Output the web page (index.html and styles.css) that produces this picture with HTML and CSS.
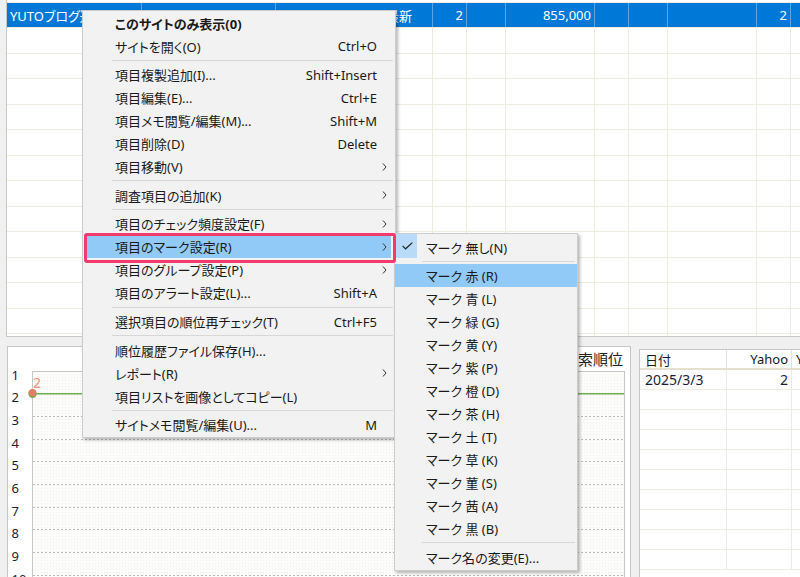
FILE: index.html
```html
<!DOCTYPE html>
<html lang="ja">
<head>
<meta charset="utf-8">
<title>順位チェック</title>
<link rel="stylesheet" href="styles.css">
</head>
<body>
<div class="app">
  <div class="list">
    <div class="row sel">
      <div class="cell w1">YUTOブログ運営</div>
      <div class="cell w2"></div>
      <div class="cell w3 r">最新</div>
      <div class="cell w4 r">2</div>
      <div class="cell w5"></div>
      <div class="cell w6 r">855,000</div>
      <div class="cell w4"></div>
      <div class="cell w5"></div>
      <div class="cell w6"></div>
      <div class="cell w4 r">2</div>
      <div class="cell w7"></div>
    </div>
    <div class="row"><div class="cell w1"></div><div class="cell w2"></div><div class="cell w3"></div><div class="cell w4"></div><div class="cell w5"></div><div class="cell w6"></div><div class="cell w4"></div><div class="cell w5"></div><div class="cell w6"></div><div class="cell w4"></div><div class="cell w7"></div></div>
    <div class="row"><div class="cell w1"></div><div class="cell w2"></div><div class="cell w3"></div><div class="cell w4"></div><div class="cell w5"></div><div class="cell w6"></div><div class="cell w4"></div><div class="cell w5"></div><div class="cell w6"></div><div class="cell w4"></div><div class="cell w7"></div></div>
    <div class="row"><div class="cell w1"></div><div class="cell w2"></div><div class="cell w3"></div><div class="cell w4"></div><div class="cell w5"></div><div class="cell w6"></div><div class="cell w4"></div><div class="cell w5"></div><div class="cell w6"></div><div class="cell w4"></div><div class="cell w7"></div></div>
    <div class="row"><div class="cell w1"></div><div class="cell w2"></div><div class="cell w3"></div><div class="cell w4"></div><div class="cell w5"></div><div class="cell w6"></div><div class="cell w4"></div><div class="cell w5"></div><div class="cell w6"></div><div class="cell w4"></div><div class="cell w7"></div></div>
    <div class="row"><div class="cell w1"></div><div class="cell w2"></div><div class="cell w3"></div><div class="cell w4"></div><div class="cell w5"></div><div class="cell w6"></div><div class="cell w4"></div><div class="cell w5"></div><div class="cell w6"></div><div class="cell w4"></div><div class="cell w7"></div></div>
    <div class="row"><div class="cell w1"></div><div class="cell w2"></div><div class="cell w3"></div><div class="cell w4"></div><div class="cell w5"></div><div class="cell w6"></div><div class="cell w4"></div><div class="cell w5"></div><div class="cell w6"></div><div class="cell w4"></div><div class="cell w7"></div></div>
    <div class="row"><div class="cell w1"></div><div class="cell w2"></div><div class="cell w3"></div><div class="cell w4"></div><div class="cell w5"></div><div class="cell w6"></div><div class="cell w4"></div><div class="cell w5"></div><div class="cell w6"></div><div class="cell w4"></div><div class="cell w7"></div></div>
    <div class="row"><div class="cell w1"></div><div class="cell w2"></div><div class="cell w3"></div><div class="cell w4"></div><div class="cell w5"></div><div class="cell w6"></div><div class="cell w4"></div><div class="cell w5"></div><div class="cell w6"></div><div class="cell w4"></div><div class="cell w7"></div></div>
    <div class="row"><div class="cell w1"></div><div class="cell w2"></div><div class="cell w3"></div><div class="cell w4"></div><div class="cell w5"></div><div class="cell w6"></div><div class="cell w4"></div><div class="cell w5"></div><div class="cell w6"></div><div class="cell w4"></div><div class="cell w7"></div></div>
    <div class="row"><div class="cell w1"></div><div class="cell w2"></div><div class="cell w3"></div><div class="cell w4"></div><div class="cell w5"></div><div class="cell w6"></div><div class="cell w4"></div><div class="cell w5"></div><div class="cell w6"></div><div class="cell w4"></div><div class="cell w7"></div></div>
    <div class="row"><div class="cell w1"></div><div class="cell w2"></div><div class="cell w3"></div><div class="cell w4"></div><div class="cell w5"></div><div class="cell w6"></div><div class="cell w4"></div><div class="cell w5"></div><div class="cell w6"></div><div class="cell w4"></div><div class="cell w7"></div></div>
    <div class="row"><div class="cell w1"></div><div class="cell w2"></div><div class="cell w3"></div><div class="cell w4"></div><div class="cell w5"></div><div class="cell w6"></div><div class="cell w4"></div><div class="cell w5"></div><div class="cell w6"></div><div class="cell w4"></div><div class="cell w7"></div></div>
    <div class="row"><div class="cell w1"></div><div class="cell w2"></div><div class="cell w3"></div><div class="cell w4"></div><div class="cell w5"></div><div class="cell w6"></div><div class="cell w4"></div><div class="cell w5"></div><div class="cell w6"></div><div class="cell w4"></div><div class="cell w7"></div></div>
  </div>

  <div class="bottom">
    <div class="chart">
      <svg class="chart-svg" width="622" height="240" viewBox="0 0 622 240">
        <defs>
          <pattern id="dots" width="3" height="3" patternUnits="userSpaceOnUse">
            <rect width="3" height="3" fill="#fcfcfa"/>
            <rect width="1" height="1" fill="#efefec"/>
          </pattern>
        </defs>
        <rect x="24.5" y="24.5" width="592" height="230" fill="url(#dots)" stroke="#c6c6c6"/>
        <g stroke="#b9b9b9" stroke-dasharray="2 2" stroke-width="1">
          <line x1="25" y1="69.5" x2="616" y2="69.5"/>
          <line x1="25" y1="92.5" x2="616" y2="92.5"/>
          <line x1="25" y1="114.5" x2="616" y2="114.5"/>
          <line x1="25" y1="137.5" x2="616" y2="137.5"/>
          <line x1="25" y1="160.5" x2="616" y2="160.5"/>
          <line x1="25" y1="182.5" x2="616" y2="182.5"/>
          <line x1="25" y1="205.5" x2="616" y2="205.5"/>
          <line x1="25" y1="228.5" x2="616" y2="228.5"/>
        </g>
        <line x1="25" y1="46.7" x2="616" y2="46.7" stroke="#6fae4f" stroke-width="1.6"/>
        <circle cx="24.5" cy="46.8" r="4.2" fill="#6fae4f"/>
        <circle cx="24.5" cy="45.8" r="3.8" fill="#e47d66"/>
        <text class="pt" x="25" y="41">2</text>
        <g class="ax">
          <text x="3.5" y="32.7">1</text>
          <text x="3.5" y="55.4">2</text>
          <text x="3.5" y="78">3</text>
          <text x="3.5" y="100.7">4</text>
          <text x="3.5" y="123.4">5</text>
          <text x="3.5" y="146">6</text>
          <text x="3.5" y="168.7">7</text>
          <text x="3.5" y="191.4">8</text>
          <text x="3.5" y="214">9</text>
          <text x="3.5" y="236.7">10</text>
        </g>
        <text class="ttl" x="615" y="18" text-anchor="end">検索順位</text>
      </svg>
    </div>
    <div class="hist">
      <div class="hrow hhead"><div class="hc hc1">日付</div><div class="hc hc2">Yahoo</div><div class="hc hc3">Y</div></div>
      <div class="hrow"><div class="hc hc1 date">2025/3/3</div><div class="hc hc2 date">2</div><div class="hc hc3"></div></div>
      <div class="hrow"><div class="hc hc1"></div><div class="hc hc2"></div><div class="hc hc3"></div></div>
      <div class="hrow"><div class="hc hc1"></div><div class="hc hc2"></div><div class="hc hc3"></div></div>
      <div class="hrow"><div class="hc hc1"></div><div class="hc hc2"></div><div class="hc hc3"></div></div>
      <div class="hrow"><div class="hc hc1"></div><div class="hc hc2"></div><div class="hc hc3"></div></div>
      <div class="hrow"><div class="hc hc1"></div><div class="hc hc2"></div><div class="hc hc3"></div></div>
      <div class="hrow"><div class="hc hc1"></div><div class="hc hc2"></div><div class="hc hc3"></div></div>
      <div class="hrow"><div class="hc hc1"></div><div class="hc hc2"></div><div class="hc hc3"></div></div>
      <div class="hrow"><div class="hc hc1"></div><div class="hc hc2"></div><div class="hc hc3"></div></div>
      <div class="hrow"><div class="hc hc1"></div><div class="hc hc2"></div><div class="hc hc3"></div></div>
    </div>
  </div>
</div>

<div class="menu">
  <div class="mi b"><span class="lb">このサイトのみ表示(0)</span><span class="sc"></span><span class="ar"></span></div>
  <div class="mi"><span class="lb">サイトを開く(O)</span><span class="sc">Ctrl+O</span><span class="ar"></span></div>
  <div class="sep"></div>
  <div class="mi"><span class="lb">項目複製追加(I)...</span><span class="sc">Shift+Insert</span><span class="ar"></span></div>
  <div class="mi"><span class="lb">項目編集(E)...</span><span class="sc">Ctrl+E</span><span class="ar"></span></div>
  <div class="mi"><span class="lb">項目メモ閲覧/編集(M)...</span><span class="sc">Shift+M</span><span class="ar"></span></div>
  <div class="mi"><span class="lb">項目削除(D)</span><span class="sc">Delete</span><span class="ar"></span></div>
  <div class="mi"><span class="lb">項目移動(V)</span><span class="sc"></span><span class="ar"><svg width="5" height="8" viewBox="0 0 5 8"><path d="M1 .5L4 4L1 7.5" fill="none" stroke="#333" stroke-width="1"/></svg></span></div>
  <div class="sep"></div>
  <div class="mi"><span class="lb">調査項目の追加(K)</span><span class="sc"></span><span class="ar"><svg width="5" height="8" viewBox="0 0 5 8"><path d="M1 .5L4 4L1 7.5" fill="none" stroke="#333" stroke-width="1"/></svg></span></div>
  <div class="sep"></div>
  <div class="mi"><span class="lb">項目のチェック頻度設定(F)</span><span class="sc"></span><span class="ar"><svg width="5" height="8" viewBox="0 0 5 8"><path d="M1 .5L4 4L1 7.5" fill="none" stroke="#333" stroke-width="1"/></svg></span></div>
  <div class="mi hov"><span class="lb">項目のマーク設定(R)</span><span class="sc"></span><span class="ar"><svg width="5" height="8" viewBox="0 0 5 8"><path d="M1 .5L4 4L1 7.5" fill="none" stroke="#333" stroke-width="1"/></svg></span></div>
  <div class="mi"><span class="lb">項目のグループ設定(P)</span><span class="sc"></span><span class="ar"><svg width="5" height="8" viewBox="0 0 5 8"><path d="M1 .5L4 4L1 7.5" fill="none" stroke="#333" stroke-width="1"/></svg></span></div>
  <div class="mi"><span class="lb">項目のアラート設定(L)...</span><span class="sc">Shift+A</span><span class="ar"></span></div>
  <div class="sep"></div>
  <div class="mi"><span class="lb">選択項目の順位再チェック(T)</span><span class="sc">Ctrl+F5</span><span class="ar"></span></div>
  <div class="sep"></div>
  <div class="mi"><span class="lb">順位履歴ファイル保存(H)...</span><span class="sc"></span><span class="ar"></span></div>
  <div class="mi"><span class="lb">レポート(R)</span><span class="sc"></span><span class="ar"><svg width="5" height="8" viewBox="0 0 5 8"><path d="M1 .5L4 4L1 7.5" fill="none" stroke="#333" stroke-width="1"/></svg></span></div>
  <div class="mi"><span class="lb">項目リストを画像としてコピー(L)</span><span class="sc"></span><span class="ar"></span></div>
  <div class="sep"></div>
  <div class="mi"><span class="lb">サイトメモ閲覧/編集(U)...</span><span class="sc">M</span><span class="ar"></span></div>
</div>

<div class="submenu">
  <div class="si checked"><span class="chk"><svg width="11" height="8" viewBox="0 0 11 8"><path d="M.6 3.8L3.6 6.8L10.3 .6" fill="none" stroke="#222" stroke-width="1.2"/></svg></span>マーク 無し(N)</div>
  <div class="ssep"></div>
  <div class="si hov">マーク 赤 (R)</div>
  <div class="si">マーク 青 (L)</div>
  <div class="si">マーク 緑 (G)</div>
  <div class="si">マーク 黄 (Y)</div>
  <div class="si">マーク 紫 (P)</div>
  <div class="si">マーク 橙 (D)</div>
  <div class="si">マーク 茶 (H)</div>
  <div class="si">マーク 土 (T)</div>
  <div class="si">マーク 草 (K)</div>
  <div class="si">マーク 菫 (S)</div>
  <div class="si">マーク 茜 (A)</div>
  <div class="si">マーク 黒 (B)</div>
  <div class="ssep"></div>
  <div class="si">マーク名の変更(E)...</div>
</div>

<div class="mark-box"></div>
</body>
</html>
```

FILE: styles.css
```css
* { box-sizing: border-box; margin: 0; padding: 0; }
html, body { width: 800px; height: 577px; overflow: hidden; }
body {
  position: relative;
  background: #f0f0f0;
  font-family: "Noto Sans", "Noto Sans CJK JP", sans-serif;
  font-size: 13px;
  color: #1a1a1a;
  font-feature-settings: "palt";
}
.app { height: 577px; display: flex; flex-direction: column; }

/* top list */
.list {
  flex: none;
  height: 337px;
  margin-left: 6px;
  padding-top: 2px;
  background: #fff;
  border-left: 1px solid #c9c9c9;
  border-bottom: 1px solid #c9c9c9;
  overflow: hidden;
}
.row { display: flex; height: 25.5px; border-top: 1px solid #efebdf; }
.row.sel { height: 25px; background: #0078d7; color: #fff; }
.cell {
  flex: none;
  height: 100%;
  display: flex;
  align-items: center;
  padding: 0 3px;
  white-space: nowrap;
  overflow: hidden;
  border-right: 1px solid #efebdf;
}
.sel .cell { border-right-color: #58a4e6; }
.cell.r { justify-content: flex-end; }
.w1 { width: 135px; }
.w2 { width: 134px; }
.w3 { width: 157px; padding-right: 20px; }
.w4 { width: 34px; }
.w5 { width: 39px; }
.w6 { width: 89px; }
.w7 { width: 60px; }

/* bottom */
.bottom { flex: 1; min-height: 0; display: flex; gap: 8px; padding-top: 9px; }
.chart {
  flex: none;
  width: 624px;
  margin-left: 7px;
  background: #fff;
  border: 1px solid #c6c6c6;
  border-bottom: none;
  overflow: hidden;
}
.chart-svg { display: block; }
.ax text { font-size: 13px; fill: #1c2233; }
.pt { font-size: 14px; fill: #ef8c78; }
.ttl { font-size: 15px; fill: #222; }

.hist {
  flex: 1;
  margin-top: 3px;
  background: #fff;
  border-left: 1px solid #c6c6c6;
  border-top: 1px solid #c6c6c6;
  overflow: hidden;
}
.hrow { display: flex; height: 20px; border-bottom: 1px solid #efebdf; }
.hhead { height: 20px; border-bottom: 2px solid #e4dfcf; }
.hc {
  flex: none;
  display: flex;
  align-items: center;
  white-space: nowrap;
  overflow: hidden;
  border-right: 1px solid #efebdf;
}
.hhead .hc { border-right-color: #e2e2e2; }
.hc1 { width: 87px; padding-left: 5px; }
.hc2 { width: 65px; justify-content: flex-end; padding-right: 3px; }
.hc3 { flex: 1; padding-left: 4px; border-right: none; }
.date { font-size: 14px; color: #1b1d3a; }

/* context menu */
.menu {
  position: absolute;
  left: 82px;
  top: 10px;
  width: 314px;
  padding: 0.5px 0;
  background: #f2f2f2;
  border: 1px solid #cccccc;
  box-shadow: 2px 2px 3px rgba(0, 0, 0, 0.28);
  z-index: 5;
}
.mi {
  display: flex;
  align-items: center;
  height: 23px;
  margin: 0 4px;
  padding-left: 28px;
  white-space: nowrap;
}
.mi.b { font-weight: 700; }
.mi.hov { background: #91c9f7; }
.lb { flex: 1; }
.sc { text-align: right; }
.ar { width: 14px; flex: none; display: flex; align-items: center; padding-left: 5px; }
.ar svg { display: block; }
.sep { height: 1px; margin: 2.33px 2px 2.33px 29px; background: #d7d7d7; }

/* submenu */
.submenu {
  position: absolute;
  left: 394px;
  top: 233px;
  width: 184px;
  padding: 1.5px 0;
  background: #f2f2f2;
  border: 1px solid #cccccc;
  box-shadow: 2px 2px 3px rgba(0, 0, 0, 0.28);
  z-index: 6;
}
.si {
  position: relative;
  display: flex;
  align-items: center;
  height: 23px;
  padding-left: 31px;
  white-space: nowrap;
}
.si.hov { background: #91c9f7; }
.chk {
  position: absolute;
  left: 0;
  top: -1.5px;
  width: 22px;
  height: 24px;
  background: #b7dbf8;
  display: flex;
  align-items: center;
  justify-content: center;
}
.chk svg { display: block; margin-left: 2px; }
.ssep { height: 1px; margin: 2.33px 2px 2.33px 27px; background: #d7d7d7; }

/* annotation */
.mark-box {
  position: absolute;
  left: 84px;
  top: 233px;
  width: 312px;
  height: 30px;
  border: 3px solid #f23a6f;
  border-radius: 3px;
  z-index: 7;
}
```
